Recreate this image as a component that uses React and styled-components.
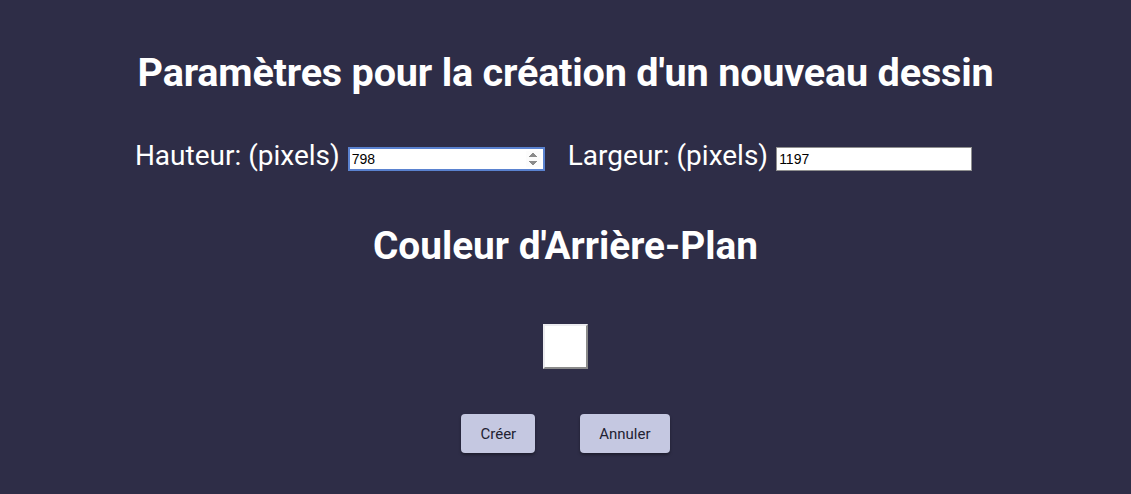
import React, { useState } from 'react';
import styled, { createGlobalStyle } from 'styled-components';

const GlobalStyle = createGlobalStyle`
  html, body {
    margin: 0;
    padding: 0;
    background: #2e2d47;
  }
  body {
    font-family: Roboto, "Liberation Sans", sans-serif;
  }
  input::-webkit-inner-spin-button {
    opacity: 1;
  }
`;

const NewDrawingDialog = () => {
  const [height, setHeight] = useState(798);
  const [width, setWidth] = useState(1197);

  return (
    <>
      <GlobalStyle />
      <Page>
        <Title>Paramètres pour la création d'un nouveau dessin</Title>
        <SizeRow>
          <Field>
            <Label>Hauteur: (pixels)</Label>
            <SizeInput
              type="number"
              value={height}
              focused
              autoFocus
              onChange={(e) => setHeight(e.target.value)}
            />
          </Field>
          <Field>
            <Label>Largeur: (pixels)</Label>
            <SizeInput
              type="text"
              value={width}
              narrow
              onChange={(e) => setWidth(e.target.value)}
            />
          </Field>
        </SizeRow>
        <Subtitle>Couleur d'Arrière-Plan</Subtitle>
        <Swatch color="#ffffff" />
        <Actions>
          <ActionButton>Créer</ActionButton>
          <ActionButton>Annuler</ActionButton>
        </Actions>
      </Page>
    </>
  );
};

const Page = styled.div`
  width: 1131px;
  height: 494px;
  display: flex;
  flex-direction: column;
  align-items: center;
  color: #ffffff;
  box-sizing: border-box;
  padding-top: 49px;
`;

const Title = styled.h1`
  margin: 0;
  font-size: 39.6px;
  font-weight: 700;
  line-height: 47px;
  letter-spacing: -0.2px;
`;

const SizeRow = styled.div`
  display: flex;
  align-items: center;
  gap: 23px;
  margin-top: 43px;
  padding-right: 24px;
`;

const Field = styled.div`
  display: flex;
  align-items: center;
  gap: 8px;
`;

const Label = styled.span`
  font-size: 28px;
  line-height: 33px;
`;

const SizeInput = styled.input`
  width: ${(p) => (p.narrow ? '196px' : '197px')};
  height: 24px;
  box-sizing: border-box;
  margin-top: 6px;
  padding: 1px 2px;
  font-family: Arial, "Liberation Sans", sans-serif;
  font-size: 14px;
  color: #000;
  background: #fff;
  border: ${(p) => (p.focused ? '2px solid #5a82d0' : '1px solid #8f8f8f')};
  outline: none;
  border-radius: 0;
`;

const Subtitle = styled.h2`
  margin: 50px 0 0;
  font-size: 38.8px;
  font-weight: 700;
  line-height: 47px;
`;

const Swatch = styled.div`
  width: 45px;
  height: 45px;
  box-sizing: border-box;
  margin-top: 55px;
  background: ${(p) => p.color};
  border: 2px solid;
  border-color: #ececf0 #8a8a8a #8a8a8a #ececf0;
`;

const Actions = styled.div`
  display: flex;
  gap: 45px;
  margin-top: 45px;
`;

const ActionButton = styled.button`
  height: 39px;
  padding: 0 19px;
  border: none;
  border-radius: 4px;
  background: #c5c8e1;
  color: #222232;
  font-family: Roboto, "Liberation Sans", sans-serif;
  font-size: 15px;
  font-weight: 400;
  box-shadow: 0 2px 3px rgba(0, 0, 0, 0.35);
  cursor: pointer;
`;

export default NewDrawingDialog;
